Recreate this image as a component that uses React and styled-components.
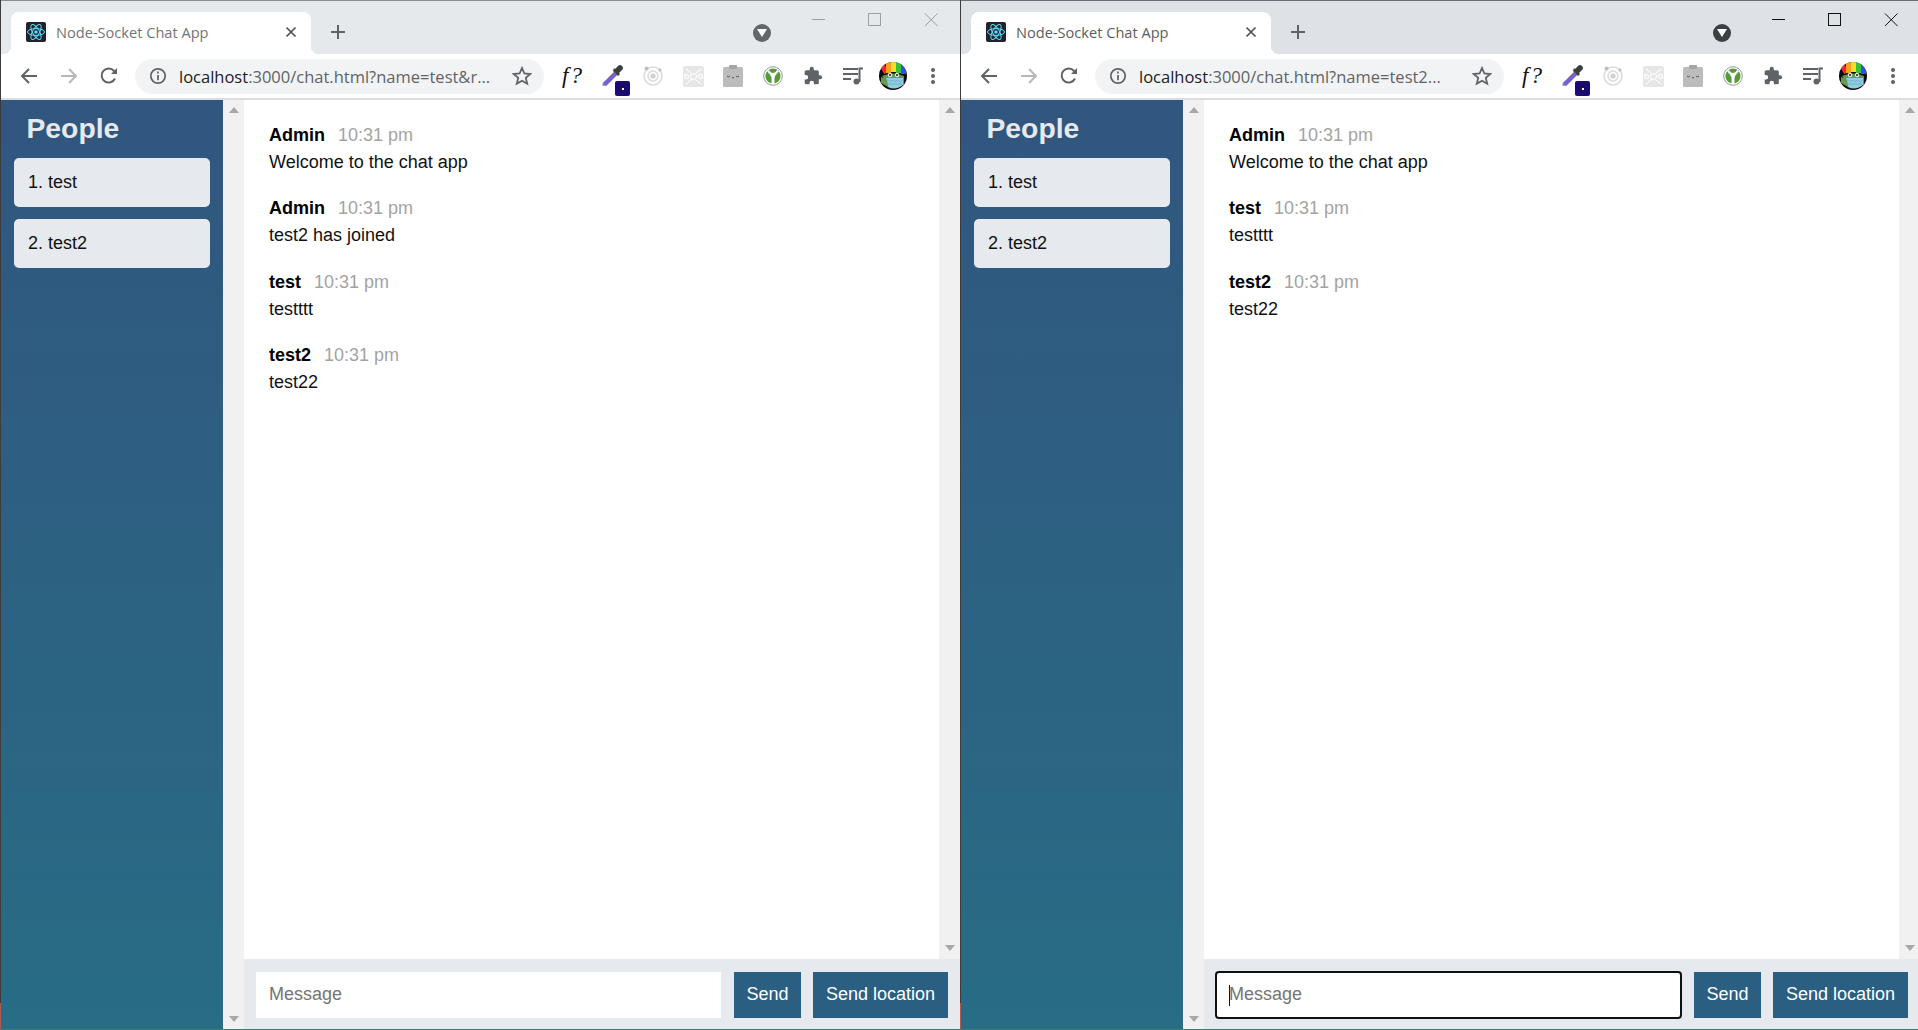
import styled, { createGlobalStyle } from 'styled-components';

const GlobalStyle = createGlobalStyle`
  html, body {
    margin: 0;
    padding: 0;
    height: 100%;
    overflow: hidden;
    background: #3f7a78;
  }
  #root {
    height: 100%;
  }
  * {
    box-sizing: border-box;
  }
`;

const Desktop = styled.div`
  display: flex;
  width: 1918px;
  height: 1029px;
  overflow: hidden;
`;

const Window = styled.section`
  flex: 0 0 960px;
  display: flex;
  flex-direction: column;
  height: 100%;
  padding-left: 1px;
  background: linear-gradient(#3c3c3c 97.5%, #a85a55 97.5%);
  font-family: 'Liberation Sans', Arial, sans-serif;
`;

const TabStrip = styled.div`
  flex: 0 0 54px;
  display: flex;
  align-items: flex-end;
  padding-left: 10px;
  border-top: 1px solid ${(props) => (props.active ? '#6b6e70' : '#8a8d90')};
  background: ${(props) => (props.active ? '#dee1e6' : '#e6e9ec')};
  position: relative;
`;

const Tab = styled.div`
  width: 300px;
  height: 42px;
  display: flex;
  align-items: center;
  padding: 0 14px 2px 15px;
  background: #fff;
  border-radius: 8px 8px 0 0;
  position: relative;
  &::before,
  &::after {
    content: '';
    position: absolute;
    bottom: 0;
    width: 8px;
    height: 8px;
  }
  &::before {
    left: -8px;
    background: radial-gradient(circle at 0 0, transparent 8px, #fff 8.5px);
  }
  &::after {
    right: -8px;
    background: radial-gradient(circle at 100% 0, transparent 8px, #fff 8.5px);
  }
`;

const TabTitle = styled.span`
  flex: 1;
  margin-left: 10px;
  font-family: 'Open Sans', sans-serif;
  font-size: 14.6px;
  color: ${(props) => (props.active ? '#5a5e63' : '#70757a')};
  white-space: nowrap;
`;

const NewTab = styled.div`
  width: 16px;
  height: 42px;
  margin-left: 19px;
  display: flex;
  align-items: center;
  padding-bottom: 2px;
`;

const StripControls = styled.div`
  position: absolute;
  top: 0;
  right: 12px;
  display: flex;
  align-items: flex-start;
`;

const ProfileDot = styled.div`
  position: absolute;
  top: 23px;
  left: 752px;
  width: 18px;
  height: 18px;
  border-radius: 50%;
  background: ${(props) => (props.active ? '#3c4043' : '#646669')};
  display: flex;
  align-items: center;
  justify-content: center;
`;

const Toolbar = styled.div`
  flex: 0 0 46px;
  display: flex;
  align-items: center;
  padding-left: 18px;
  background: #fff;
  border-bottom: 2px solid #dcdee0;
`;

const NavButton = styled.div`
  width: 40px;
  flex: none;
  display: flex;
  align-items: center;
`;

const Omnibox = styled.div`
  width: 409px;
  height: 35px;
  margin-left: -4px;
  display: flex;
  align-items: center;
  padding: 0 12px 0 14px;
  border-radius: 18px;
  background: #f1f3f4;
`;

const Url = styled.span`
  flex: 1;
  margin-left: 12px;
  font-family: 'Open Sans', sans-serif;
  font-size: 16.5px;
  color: #5f6368;
  white-space: nowrap;
  overflow: hidden;
`;

const Host = styled.span`
  color: #202124;
`;

const Extensions = styled.div`
  display: flex;
  align-items: center;
  margin-left: 9px;
`;

const ExtSlot = styled.div`
  width: 40px;
  height: 40px;
  display: flex;
  align-items: center;
  justify-content: center;
  position: relative;
  font-family: 'Liberation Serif', serif;
  font-style: italic;
  font-size: 23px;
  letter-spacing: 2px;
  color: #111;
`;

const Badge = styled.div`
  position: absolute;
  right: 3px;
  bottom: 0;
  width: 15px;
  height: 15px;
  border-radius: 2px;
  background: #1c0a70;
  display: flex;
  align-items: center;
  justify-content: center;
  &::after {
    content: '';
    width: 2px;
    height: 2px;
    background: #fff;
  }
`;

const Page = styled.div`
  flex: 1;
  min-height: 0;
  display: flex;
  background: #fff;
`;

const Sidebar = styled.aside`
  flex: 0 0 222px;
  padding: 0 13px;
  background: linear-gradient(#31567f, #286c85);
`;

const SidebarTitle = styled.h2`
  margin: 0;
  height: 58px;
  padding: 10px 0 0 12.5px;
  font-size: 28.3px;
  line-height: 36px;
  font-weight: 700;
  color: #e6e9ed;
`;

const UserList = styled.ol`
  list-style: none;
  margin: 0;
  padding: 0;
  display: flex;
  flex-direction: column;
  gap: 12px;
`;

const UserItem = styled.li`
  height: 49px;
  padding: 0 14px;
  border-radius: 5px;
  background: #e6e9ed;
  font-size: 18px;
  line-height: 49px;
  color: #111;
`;

const Scrollbar = styled.div`
  flex: 0 0 21px;
  display: flex;
  flex-direction: column;
  align-items: center;
  justify-content: space-between;
  padding: 7px 0 ${(props) => (props.inner ? '8px' : '7px')};
  background: #f1f1f1;
`;

const Arrow = styled.div`
  width: 0;
  height: 0;
  border-left: 5px solid transparent;
  border-right: 5px solid transparent;
  ${(props) => (props.down ? 'border-top: 6px solid #a8a8a8;' : 'border-bottom: 6px solid #a8a8a8;')}
`;

const Chat = styled.main`
  flex: 1;
  min-width: 0;
  display: flex;
  flex-direction: column;
`;

const ChatBody = styled.div`
  flex: 1;
  min-height: 0;
  display: flex;
`;

const Messages = styled.div`
  flex: 1;
  padding: 25px 0 0 25px;
  display: flex;
  flex-direction: column;
  gap: 26.4px;
`;

const Message = styled.div`
  display: flex;
  flex-direction: column;
  gap: 7px;
  line-height: 20px;
  font-size: 18px;
  color: #111;
`;

const MessageHead = styled.div`
  display: flex;
  align-items: baseline;
  gap: 13px;
`;

const Sender = styled.span`
  font-weight: 700;
  color: #000;
`;

const Time = styled.span`
  color: #a3a3a3;
`;

const Composer = styled.form`
  flex: 0 0 70px;
  display: flex;
  align-items: center;
  gap: 12px;
  padding: 1px 12px 0;
  background: #e6e9ed;
`;

const MessageBox = styled.div`
  flex: 1;
  position: relative;
  margin-right: 1px;
`;

const MessageInput = styled.input`
  display: block;
  width: 100%;
  height: 46px;
  padding: 0 13px;
  border: 0;
  border-radius: ${(props) => (props.$focused ? '3px' : '0')};
  outline: ${(props) => (props.$focused ? '2px solid #101010' : 'none')};
  outline-offset: -1px;
  background: #fff;
  font-family: inherit;
  font-size: 18px;
  &::placeholder {
    color: #757575;
  }
`;

const Caret = styled.span`
  position: absolute;
  left: 13px;
  top: 13px;
  width: 1px;
  height: 21px;
  background: #111;
`;

const SendButton = styled.button`
  height: 46px;
  width: ${(props) => props.$width}px;
  flex: none;
  padding: 0;
  border: 0;
  background: #2a5f82;
  font-family: inherit;
  font-size: 18px;
  color: #fff;
`;

function ReactFavicon() {
  return (
    <svg width="20" height="20" viewBox="0 0 20 20">
      <rect width="20" height="20" rx="2" fill="#20232a" />
      <g fill="none" stroke="#61dafb" strokeWidth="1">
        <ellipse cx="10" cy="10" rx="8.5" ry="3.4" />
        <ellipse cx="10" cy="10" rx="8.5" ry="3.4" transform="rotate(60 10 10)" />
        <ellipse cx="10" cy="10" rx="8.5" ry="3.4" transform="rotate(120 10 10)" />
      </g>
      <circle cx="10" cy="10" r="1.7" fill="#61dafb" />
    </svg>
  );
}

function CloseIcon() {
  return (
    <svg width="12" height="12" viewBox="0 0 12 12" stroke="#4c4f52" strokeWidth="1.7">
      <path d="M1.5 1.5l9 9M10.5 1.5l-9 9" />
    </svg>
  );
}

function PlusIcon() {
  return (
    <svg width="16" height="16" viewBox="0 0 16 16" stroke="#5f6368" strokeWidth="2">
      <path d="M8 1v14M1 8h14" />
    </svg>
  );
}

function WindowControls({ color }) {
  return (
    <StripControls>
      <svg width="150" height="34" viewBox="0 0 150 34" fill="none" stroke={color} strokeWidth="1">
        <path d="M14 18.5h13" />
        <rect x="70.5" y="12.5" width="12" height="12" />
        <path d="M127 12.5l12.5 12.5M139.5 12.5L127 25" />
      </svg>
    </StripControls>
  );
}

function BackIcon() {
  return (
    <svg width="20" height="20" viewBox="0 0 20 20" fill="none" stroke="#5f6368" strokeWidth="2">
      <path d="M18 10H3M10 3l-7 7 7 7" />
    </svg>
  );
}

function ForwardIcon() {
  return (
    <svg width="20" height="20" viewBox="0 0 20 20" fill="none" stroke="#b6b8ba" strokeWidth="2">
      <path d="M2 10h15M10 3l7 7-7 7" />
    </svg>
  );
}

function ReloadIcon() {
  return (
    <svg width="20" height="20" viewBox="0 0 20 20" fill="none" stroke="#5f6368" strokeWidth="2">
      <path d="M16 12.5A7 7 0 1 1 15 5l2 2" />
      <path d="M18 2v6h-6z" fill="#5f6368" stroke="none" />
    </svg>
  );
}

function InfoIcon() {
  return (
    <svg width="18" height="18" viewBox="0 0 18 18" fill="none" stroke="#5f6368" strokeWidth="1.7" style={{ flex: 'none' }}>
      <circle cx="9" cy="9" r="7.2" />
      <path d="M9 8v5.2M9 4.6v2" />
    </svg>
  );
}

function StarIcon() {
  return (
    <svg width="20" height="20" viewBox="0 0 20 20" fill="none" stroke="#5f6368" strokeWidth="1.8" style={{ flex: 'none' }}>
      <path d="M10 2l2.4 5.5 6 .5-4.6 3.9 1.4 5.9L10 14.8l-5.2 3 1.4-5.9L1.6 8l6-.5z" />
    </svg>
  );
}

function DropperIcon() {
  return (
    <svg width="24" height="24" viewBox="0 0 24 24">
      <path d="M3 21l-1 1 0-3L13 8l3 3L5 22z" fill="#7a5ce0" stroke="#9aa0a6" strokeWidth="1" />
      <path d="M12 7l5 5 2-2-1-1 3-3a2.5 2.5 0 0 0-4-4l-3 3-1-1z" fill="#3b3f44" />
    </svg>
  );
}

function OrbitIcon() {
  return (
    <svg width="22" height="22" viewBox="0 0 22 22" fill="none" stroke="#dcdcdc" strokeWidth="1.6">
      <circle cx="11" cy="11" r="9" />
      <circle cx="11" cy="11" r="5" />
      <circle cx="11" cy="11" r="2.6" fill="#d0d0d0" stroke="none" />
      <circle cx="4.5" cy="3.5" r="2" fill="#bdbdbd" stroke="none" />
      <circle cx="18" cy="5" r="1.6" fill="#bdbdbd" stroke="none" />
    </svg>
  );
}

function PatternIcon() {
  return (
    <svg width="21" height="21" viewBox="0 0 21 21">
      <rect width="21" height="21" rx="2" fill="#e6e6e6" />
      <g fill="none" stroke="#fafafa" strokeWidth="1.3">
        <circle cx="10.5" cy="10.5" r="3" />
        <circle cx="3.5" cy="10.5" r="2" />
        <circle cx="17.5" cy="10.5" r="2" />
        <path d="M3 3l5 4M18 3l-5 4M3 18l5-4M18 18l-5-4" />
      </g>
    </svg>
  );
}

function ClipIcon() {
  return (
    <svg width="20" height="22" viewBox="0 0 20 22">
      <rect y="2" width="20" height="20" rx="1.5" fill="#bcbcbc" />
      <rect x="6" width="8" height="4" rx="1" fill="#a4a4a4" />
      <path d="M4 11q1.5 2 3 0M9 12.500q1 1 2 0M13 11q1.500 2 3 0" fill="none" stroke="#555" strokeWidth="1" />
    </svg>
  );
}

function GreenIcon() {
  return (
    <svg width="20" height="20" viewBox="0 0 20 20">
      <circle cx="10" cy="10" r="9.300" fill="#fff" stroke="#8c9a8c" strokeWidth="1" />
      <circle cx="10" cy="10" r="7.600" fill="#57993a" />
      <path d="M4 5c2 3 4 4 4.500 7v6h3v-6C12 9 14 8 16 5l-2-1c-1 2-2.500 3-4 3S7 6 6 4z" fill="#fff" />
      <circle cx="10" cy="4.500" r="1.500" fill="#57993a" />
    </svg>
  );
}

function PuzzleIcon() {
  return (
    <svg width="20" height="20" viewBox="0 0 24 24" fill="#5f6368">
      <path d="M20.500 11H19V7a2 2 0 0 0-2-2h-4V3.500a2.500 2.500 0 0 0-5 0V5H4a2 2 0 0 0-2 2v3.800h1.500a2.700 2.700 0 0 1 0 5.400H2V20a2 2 0 0 0 2 2h3.800v-1.500a2.700 2.700 0 0 1 5.400 0V22H17a2 2 0 0 0 2-2v-4h1.500a2.500 2.500 0 0 0 0-5z" />
    </svg>
  );
}

function QueueIcon() {
  return (
    <svg width="22" height="20" viewBox="0 0 22 20" fill="none" stroke="#5f6368" strokeWidth="2">
      <path d="M1 3h15M1 8h15M1 13h8" />
      <path d="M17.500 16V2.500h3.500" />
      <circle cx="14.500" cy="15.500" r="3" fill="#5f6368" stroke="none" />
    </svg>
  );
}

function Avatar() {
  return (
    <svg width="28" height="28" viewBox="0 0 28 28">
      <defs>
        <clipPath id="avatar-clip">
          <circle cx="14" cy="14" r="14" />
        </clipPath>
      </defs>
      <g clipPath="url(#avatar-clip)">
        <rect width="28" height="28" fill="#0a0a0a" />
        <rect x="2" width="5" height="12" fill="#f02a2a" transform="rotate(-30 4 6)" />
        <rect x="7" y="0" width="5" height="11" fill="#f8a020" />
        <rect x="12" y="0" width="5" height="10" fill="#f4e020" />
        <rect x="17" y="0" width="5" height="11" fill="#36c040" />
        <rect x="22" y="1" width="5" height="11" fill="#3050e0" />
        <path d="M3 14q11-5 22 0v9H8z" fill="#5c9a50" />
        <circle cx="11" cy="13" r="2.200" fill="#e8e8e8" />
        <circle cx="18" cy="13" r="2.200" fill="#e8e8e8" />
        <circle cx="11" cy="13" r="1" fill="#111" />
        <circle cx="18" cy="13" r="1" fill="#111" />
        <path d="M7 16h17v7q-8 6-15 2z" fill="#8fcde0" />
        <path d="M8 19h15M8 22h15" stroke="#6aa8c0" strokeWidth="0.700" />
        <path d="M2 15l6 3 1 7-7-4z" fill="#6a9a4a" />
      </g>
    </svg>
  );
}

function KebabIcon() {
  return (
    <svg width="6" height="18" viewBox="0 0 6 18" fill="#5f6368">
      <circle cx="3" cy="3" r="2" />
      <circle cx="3" cy="9" r="2" />
      <circle cx="3" cy="15" r="2" />
    </svg>
  );
}

const users = ['1. test', '2. test2'];

const leftMessages = [
  { from: 'Admin', text: 'Welcome to the chat app' },
  { from: 'Admin', text: 'test2 has joined' },
  { from: 'test', text: 'testttt' },
  { from: 'test2', text: 'test22' },
];

const rightMessages = [
  { from: 'Admin', text: 'Welcome to the chat app' },
  { from: 'test', text: 'testttt' },
  { from: 'test2', text: 'test22' },
];

function BrowserWindow({ active, url, host, messages }) {
  return (
    <Window>
      <TabStrip active={active}>
        <Tab>
          <ReactFavicon />
          <TabTitle active={active}>Node-Socket Chat App</TabTitle>
          <CloseIcon />
        </Tab>
        <NewTab>
          <PlusIcon />
        </NewTab>
        <ProfileDot active={active}>
          <svg width="10" height="8" viewBox="0 0 10 8" fill="#fff">
            <path d="M0 0h10L5 8z" />
          </svg>
        </ProfileDot>
        <WindowControls color={active ? '#111' : '#9c9ea0'} />
      </TabStrip>
      <Toolbar>
        <NavButton>
          <BackIcon />
        </NavButton>
        <NavButton>
          <ForwardIcon />
        </NavButton>
        <NavButton>
          <ReloadIcon />
        </NavButton>
        <Omnibox>
          <InfoIcon />
          <Url>
            <Host>{host}</Host>
            {url}
          </Url>
          <StarIcon />
        </Omnibox>
        <Extensions>
          <ExtSlot>f?</ExtSlot>
          <ExtSlot>
            <DropperIcon />
            <Badge />
          </ExtSlot>
          <ExtSlot>
            <OrbitIcon />
          </ExtSlot>
          <ExtSlot>
            <PatternIcon />
          </ExtSlot>
          <ExtSlot>
            <ClipIcon />
          </ExtSlot>
          <ExtSlot>
            <GreenIcon />
          </ExtSlot>
          <ExtSlot>
            <PuzzleIcon />
          </ExtSlot>
          <ExtSlot>
            <QueueIcon />
          </ExtSlot>
          <ExtSlot>
            <Avatar />
          </ExtSlot>
          <ExtSlot>
            <KebabIcon />
          </ExtSlot>
        </Extensions>
      </Toolbar>
      <Page>
        <Sidebar>
          <SidebarTitle>People</SidebarTitle>
          <UserList>
            {users.map((user) => (
              <UserItem key={user}>{user}</UserItem>
            ))}
          </UserList>
        </Sidebar>
        <Scrollbar>
          <Arrow />
          <Arrow down />
        </Scrollbar>
        <Chat>
          <ChatBody>
            <Messages>
              {messages.map((message, index) => (
                <Message key={index}>
                  <MessageHead>
                    <Sender>{message.from}</Sender>
                    <Time>10:31 pm</Time>
                  </MessageHead>
                  <span>{message.text}</span>
                </Message>
              ))}
            </Messages>
            <Scrollbar inner>
              <Arrow />
              <Arrow down />
            </Scrollbar>
          </ChatBody>
          <Composer>
            <MessageBox>
              <MessageInput placeholder="Message" $focused={active} readOnly />
              {active && <Caret />}
            </MessageBox>
            <SendButton type="button" $width={67}>Send</SendButton>
            <SendButton type="button" $width={135}>Send location</SendButton>
          </Composer>
        </Chat>
      </Page>
    </Window>
  );
}

export default function App() {
  return (
    <>
      <GlobalStyle />
      <Desktop>
        <BrowserWindow
          host="localhost"
          url=":3000/chat.html?name=test&r..."
          messages={leftMessages}
        />
        <BrowserWindow
          active
          host="localhost"
          url=":3000/chat.html?name=test2..."
          messages={rightMessages}
        />
      </Desktop>
    </>
  );
}
